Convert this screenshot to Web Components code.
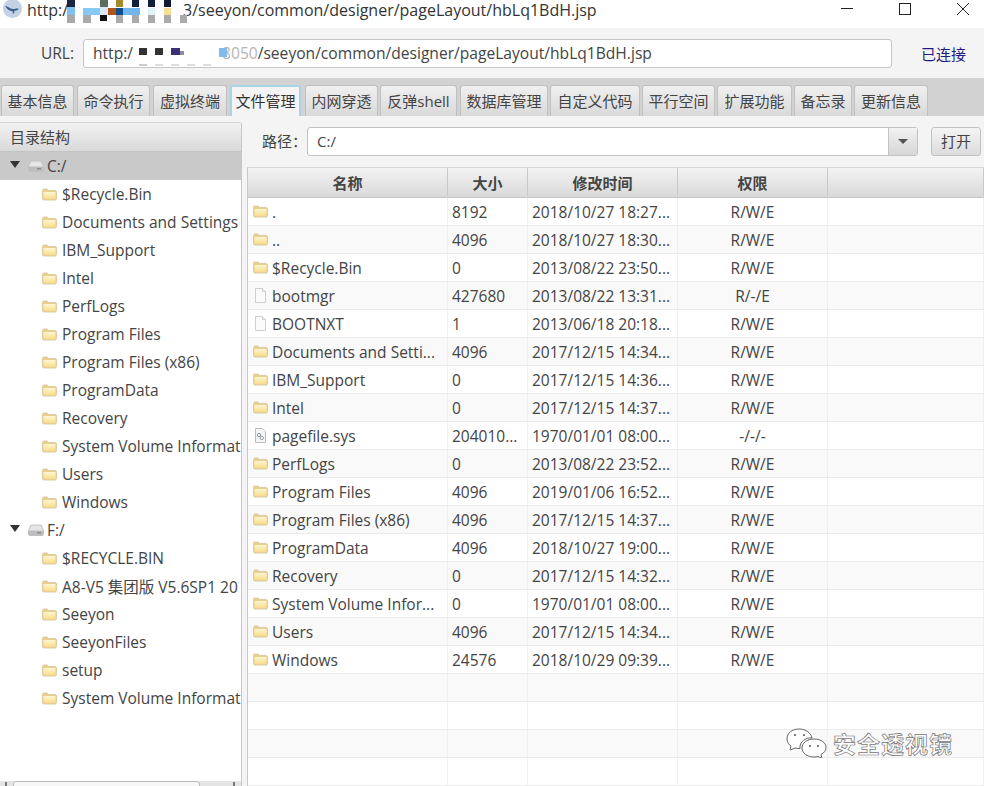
<!DOCTYPE html>
<html lang="zh">
<head>
<meta charset="utf-8">
<title>file manager</title>
<style>
  html, body { margin: 0; height: 100%; overflow: hidden; background: #f4f4f4; }
  body { font-family: "Open Sans", "Noto Sans CJK SC", sans-serif; color: #3c3c3c; }
</style>
</head>
<body>
<app-window></app-window>

<script>
const FOLDER = `<svg width="15" height="13" viewBox="0 0 15 13"><defs><linearGradient id="fold" x1="0" y1="0" x2="0" y2="1"><stop offset="0" stop-color="#fef6d2"/><stop offset="1" stop-color="#f8dc8a"/></linearGradient></defs><path d="M.5 2.500C.5 1.600 1 1 2 1h3.200l1.200 1.500H13c.9 0 1.500.5 1.500 1.400v6.600c0 .9-.6 1.500-1.500 1.500H2c-1 0-1.500-.6-1.500-1.500z" fill="#ebcf8c" stroke="#dccda6"/><rect x="1.500" y="4" width="12" height="7" fill="url(#fold)"/></svg>`;
const DOC = `<svg width="15" height="15" viewBox="-1 0 15 15"><path d="M1.500.5h7l3 3v11h-10z" fill="#fbfbfb" stroke="#cfcfcf"/><path d="M8.500.5v3h3" fill="#eee" stroke="#cfcfcf"/></svg>`;
const SYS = `<svg width="15" height="15" viewBox="-1 0 15 15"><path d="M1.500.5h7l3 3v11h-10z" fill="#f6f6f6" stroke="#bcbcbc"/><circle cx="5" cy="7" r="1.700" fill="none" stroke="#8a93a3"/><circle cx="7.800" cy="10" r="1.700" fill="none" stroke="#9aa2ae"/></svg>`;
const DRIVE = `<svg width="16" height="12" viewBox="0 0 16 12"><path d="M3 1h10l2.500 5.500v4c0 .6-.4 1-1 1h-13c-.6 0-1-.4-1-1v-4z" fill="#e6e6e6" stroke="#c0c0c0"/><rect x="1" y="6.500" width="14" height="4.500" fill="#bdbdbd"/><rect x="9" y="8" width="4" height="1.400" fill="#8a8a8a"/></svg>`;

function grad(top, bottom) { return `linear-gradient(${top}, ${bottom})`; }

class TitleBar extends HTMLElement {
  constructor() {
    super();
    this.attachShadow({ mode: 'open' });
    const blocks = [
      [67,0,8,7,'#1a2540'],[67,7,8,8,'#7fc0ee'],[67,15,8,8,'#a9a9a9'],
      [83,8,17,7,'#88c8f5'],[83,15,8,8,'#aaa'],
      [100,0,8,7,'#5a6f62'],[100,7,8,8,'#d9e8f2'],[100,15,7,6,'#111'],[108,8,8,7,'#b5541a'],
      [116,0,7,7,'#a58a2a'],[116,8,7,7,'#0d4f8c'],[116,15,7,8,'#aaa'],[123,8,17,7,'#72b6ee'],
      [132,0,7,7,'#13203a'],[132,15,7,8,'#aaa'],
      [148,0,7,7,'#10203a'],[148,8,7,7,'#dff3fa'],[148,15,7,8,'#aaa'],
      [164,0,7,7,'#0f1c33'],[164,8,7,7,'#fbdc95'],[164,15,7,8,'#aaa'],
      [180,15,7,8,'#aaa']
    ].map(b => `<rect x="${b[0]}" y="${b[1]}" width="${b[2]}" height="${b[3]}" fill="${b[4]}"/>`).join('');
    this.shadowRoot.innerHTML = `
      <style>
        :host { display: flex; align-items: flex-start; height: 28px; background: #fff; position: relative; padding-left: 2px; box-sizing: border-box; }
        .logo { width: 21px; height: 19px; flex: none; }
        .text { font-size: 16px; line-height: 18px; margin: 1px 0 0 4px; white-space: pre; color: #333; }
        .hole { display: inline-block; width: 115px; }
        .mosaic { position: absolute; left: 0; top: 0; }
        .btns { margin-left: auto; display: flex; gap: 46px; padding: 3px 15px 0 0; }
        .btns svg { display: block; width: 12px; height: 12px; }
      </style>
      <svg class="logo" viewBox="0 0 21 19">
        <circle cx="10.500" cy="8.500" r="9.500" fill="#c3d2e5"/>
        <path d="M3 6c3 0 5 3 8 3s4-1 6 0c-2 1-3 2-5 2 1 2 0 2.500-1.500 2.500l.5-2C7 11 5 9 3 6z" fill="#3d5f92"/>
      </svg>
      <span class="text">http:/<span class="hole"></span>3/seeyon/common/designer/pageLayout/hbLq1BdH.jsp</span>
      <svg class="mosaic" width="200" height="28">${blocks}</svg>
      <div class="btns">
        <svg viewBox="0 0 12 12"><path d="M0 5.500h12" stroke="#222" fill="none"/></svg>
        <svg viewBox="0 0 12 12"><rect x=".5" y=".5" width="11" height="11" stroke="#222" fill="none"/></svg>
        <svg viewBox="0 0 12 12"><path d="M0 0l12 12M12 0L0 12" stroke="#222" fill="none"/></svg>
      </div>`;
  }
}

class UrlBar extends HTMLElement {
  constructor() {
    super();
    this.attachShadow({ mode: 'open' });
    this.shadowRoot.innerHTML = `
      <style>
        :host { display: flex; align-items: center; height: 50px; background: #f4f4f4; font-size: 15.500px; box-sizing: border-box; padding-left: 41px; position: relative; }
        label { width: 42px; color: #444; }
        .input { width: 809px; height: 29px; box-sizing: border-box; background: #fff; border: 1px solid #c6c6c6; border-radius: 3px; padding-left: 9px; line-height: 27px; white-space: pre; color: #444; font-size: 15.600px; }
        .hole { display: inline-block; width: 89px; }
        .faint { color: #b5b5b5; }
        .status { margin-left: 29px; color: #1c1c80; font-size: 15px; }
        svg { position: absolute; left: 0; top: 0; }
      </style>
      <label>URL:</label>
      <div class="input">http:/<span class="hole"></span><span class="faint">8050</span>/seeyon/common/designer/pageLayout/hbLq1BdH.jsp</div>
      <div class="status">已连接</div>
      <svg width="240" height="50">
        <rect x="139" y="20" width="8" height="7" fill="#333"/><rect x="155" y="20" width="8" height="7" fill="#333"/>
        <rect x="171" y="20" width="9" height="7" fill="#3a3178"/><rect x="180" y="23" width="4" height="4" fill="#8b8ba8"/>
        <rect x="219" y="20" width="8" height="9" fill="#7fbcec"/>
        <rect x="139" y="36" width="8" height="2" fill="#ccc"/><rect x="155" y="36" width="8" height="2" fill="#ddd"/>
        <rect x="171" y="36" width="8" height="2" fill="#ddd"/><rect x="187" y="36" width="8" height="2" fill="#ddd"/>
        <rect x="203" y="36" width="8" height="2" fill="#ddd"/>
      </svg>`;
  }
}

class TabStrip extends HTMLElement {
  constructor() {
    super();
    this.attachShadow({ mode: 'open' });
    const tabs = [['基本信息',1,74],['命令执行',77,150],['虚拟终端',153,227],['文件管理',230,301],['内网穿透',305,378],['反弹shell',380,457],['数据库管理',460,548],['自定义代码',550,640],['平行空间',642,715],['扩展功能',717,792],['备忘录',794,852],['更新信息',854,928]];
    let x = 0;
    const html = tabs.map((t, i) => {
      const out = `<div class="tab${i === 3 ? ' on' : ''}" style="margin-left:${t[1] - x}px;width:${t[2] - t[1]}px">${t[0]}</div>`;
      x = t[2];
      return out;
    }).join('');
    this.shadowRoot.innerHTML = `
      <style>
        :host { display: flex; align-items: flex-end; height: 38px; box-sizing: border-box; background: #d2d2d2; }
        .tab { height: 31px; box-sizing: border-box; padding-bottom: 2px; display: flex; align-items: center; justify-content: center; font-size: 15px; color: #444; border: 1px solid #c0c0c0; border-bottom: 0; border-radius: 3px 3px 0 0; background: ${grad('#f0f0f0','#d9d9d9')}; white-space: nowrap; }
        .on { background: #f4f4f4; border: 2px solid #a9d3e6; border-bottom: 0; color: #333; }
      </style>
      ${html}`;
  }
}

class TreeRow extends HTMLElement {
  constructor() {
    super();
    this.attachShadow({ mode: 'open' });
  }
  connectedCallback() {
    const drive = this.hasAttribute('drive');
    this.shadowRoot.innerHTML = `
      <style>
        :host { display: flex; align-items: center; height: 28px; font-size: 15.500px; white-space: nowrap; color: #444; padding-left: ${drive ? 10 : 42}px; }
        :host([open]) { background: #c9c9c9; }
        .arrow { width: 0; height: 0; border: 5px solid transparent; border-top: 7px solid #333; border-bottom: 0; margin-right: 8px; margin-top: -3px; }
        svg { flex: none; margin-right: ${drive ? 3 : 5}px; }
      </style>
      ${drive ? '<span class="arrow"></span>' + DRIVE : FOLDER}<slot></slot>`;
  }
}

class TreePanel extends HTMLElement {
  constructor() {
    super();
    this.attachShadow({ mode: 'open' });
    const c = ['$Recycle.Bin','Documents and Settings','IBM_Support','Intel','PerfLogs','Program Files','Program Files (x86)','ProgramData','Recovery','System Volume Informat','Users','Windows'];
    const f = ['$RECYCLE.BIN','A8-V5 集团版 V5.6SP1 20','Seeyon','SeeyonFiles','setup','System Volume Informat'];
    const rows = list => list.map(n => `<tree-row>${n}</tree-row>`).join('');
    this.shadowRoot.innerHTML = `
      <style>
        :host { display: flex; flex-direction: column; width: 242px; flex: none; box-sizing: border-box; background: #fff; border-right: 1px solid #c8c8c8; border-top: 1px solid #d4d4d4; margin-top: 6px; position: relative; overflow: hidden; border-radius: 0 3px 0 0; }
        .head { height: 29px; box-sizing: border-box; padding-bottom: 2px; flex: none; display: flex; align-items: center; padding-left: 10px; font-size: 15px; color: #444; background: ${grad('#f2f2f2','#d9d9d9')}; border-bottom: 1px solid #c4c4c4; }
        .bar { position: absolute; left: 0; right: 0; bottom: 0; height: 5px; background: #e4e4e4; }
        .bar i { position: absolute; left: 13px; top: 0; width: 185px; height: 8px; background: #f7f7f7; border: 1px solid #bbb; border-radius: 3px; }
        .bar b { position: absolute; top: 1px; width: 2px; height: 4px; background: #777; }
      </style>
      <div class="head">目录结构</div>
      <tree-row drive open>C:/</tree-row>${rows(c)}
      <tree-row drive>F:/</tree-row>${rows(f)}
      <div class="bar"><b style="left:5px"></b><i></i><b style="left:233px"></b></div>`;
  }
}

class PathBar extends HTMLElement {
  constructor() {
    super();
    this.attachShadow({ mode: 'open' });
    this.shadowRoot.innerHTML = `
      <style>
        :host { display: flex; align-items: flex-start; height: 51px; box-sizing: border-box; padding: 11px 3px 0 15px; flex: none; font-size: 15px; color: #444; }
        label { width: 45px; flex: none; line-height: 29px; }
        .combo { width: 611px; height: 29px; box-sizing: border-box; display: flex; background: #fff; border: 1px solid #c2c2c2; border-radius: 3px; }
        .val { flex: 1; padding-left: 9px; line-height: 27px; }
        .drop { width: 28px; background: ${grad('#f2f2f2','#d6d6d6')}; border-left: 1px solid #c4c4c4; display: flex; align-items: center; justify-content: center; }
        .drop i { border: 5px solid transparent; border-top: 5px solid #555; border-bottom: 0; }
        button { all: unset; margin-left: 13px; width: 50px; height: 29px; box-sizing: border-box; text-align: center; line-height: 27px; border: 1px solid #c2c2c2; border-radius: 3px; background: ${grad('#f4f4f4','#dcdcdc')}; }
      </style>
      <label>路径：</label>
      <div class="combo"><div class="val">C:/</div><div class="drop"><i></i></div></div>
      <button>打开</button>`;
  }
}

class FileTable extends HTMLElement {
  constructor() {
    super();
    this.attachShadow({ mode: 'open' });
    const t = FOLDER, d = DOC, s = SYS;
    const files = [
      [t,'.','8192','2018/10/27 18:27...','R/W/E'],
      [t,'..','4096','2018/10/27 18:30...','R/W/E'],
      [t,'$Recycle.Bin','0','2013/08/22 23:50...','R/W/E'],
      [d,'bootmgr','427680','2013/08/22 13:31...','R/-/E'],
      [d,'BOOTNXT','1','2013/06/18 20:18...','R/W/E'],
      [t,'Documents and Setti...','4096','2017/12/15 14:34...','R/W/E'],
      [t,'IBM_Support','0','2017/12/15 14:36...','R/W/E'],
      [t,'Intel','0','2017/12/15 14:37...','R/W/E'],
      [s,'pagefile.sys','204010...','1970/01/01 08:00...','-/-/-'],
      [t,'PerfLogs','0','2013/08/22 23:52...','R/W/E'],
      [t,'Program Files','4096','2019/01/06 16:52...','R/W/E'],
      [t,'Program Files (x86)','4096','2017/12/15 14:37...','R/W/E'],
      [t,'ProgramData','4096','2018/10/27 19:00...','R/W/E'],
      [t,'Recovery','0','2017/12/15 14:32...','R/W/E'],
      [t,'System Volume Infor...','0','1970/01/01 08:00...','R/W/E'],
      [t,'Users','4096','2017/12/15 14:34...','R/W/E'],
      [t,'Windows','24576','2018/10/29 09:39...','R/W/E'],
      [], [], [], []
    ];
    const row = f => f.length
      ? `<div class="row"><div class="c">${f[0]}<span>${f[1]}</span></div><div class="c">${f[2]}</div><div class="c">${f[3]}</div><div class="c mid">${f[4]}</div><div class="c"></div></div>`
      : `<div class="row"><div class="c"></div><div class="c"></div><div class="c"></div><div class="c"></div><div class="c"></div></div>`;
    this.shadowRoot.innerHTML = `
      <style>
        :host { display: block; flex: 1; min-height: 0; overflow: hidden; border-left: 1px solid #c8c8c8; border-top: 1px solid #d6d6d6; background: #fff; font-size: 15.500px; color: #444; }
        .row, .headrow { display: grid; grid-template-columns: 200px 80px 150px 150px 1fr; }
        .headrow { height: 30px; box-sizing: border-box; padding-bottom: 1px; background: ${grad('#f3f3f3','#d9d9d9')}; border-bottom: 1px solid #c6c6c6; font-size: 15px; font-weight: 700; color: #444; }
        .headrow div { display: flex; align-items: center; justify-content: center; border-right: 1px solid #c9c9c9; }
        .row { height: 28px; box-sizing: border-box; border-bottom: 1px solid #ececec; }
        .row:nth-child(even) { background: #f9f9f9; }
        .c { display: flex; align-items: center; padding-left: 4px; border-right: 1px solid #efefef; white-space: nowrap; overflow: hidden; }
        .c svg { flex: none; margin: 0 4px 0 1px; }
        .mid { justify-content: center; padding-left: 0; }
      </style>
      <div class="headrow"><div>名称</div><div>大小</div><div>修改时间</div><div>权限</div><div></div></div>
      <div>${files.map(row).join('')}</div>`;
  }
}

class WechatMark extends HTMLElement {
  constructor() {
    super();
    this.attachShadow({ mode: 'open' });
    this.shadowRoot.innerHTML = `
      <style>
        :host { position: absolute; left: 786px; top: 726px; display: flex; align-items: center; gap: 6px; }
        span { font: 700 23px "Noto Sans CJK SC", sans-serif; letter-spacing: 1px; color: #fff; -webkit-text-stroke: .7px #777; }
        svg { display: block; }
      </style>
      <svg width="41" height="30" viewBox="0 0 41 30" fill="#fff" stroke="#666" stroke-width="1">
        <path d="M13 1C6 1 1 5 1 11c0 3 2 6 4 7l-1 4 5-2c2 .6 3 .6 5 .5C13 14 20 9 26 10 25 5 20 1 13 1z"/>
        <path d="M28 11c-7 0-12 4-12 9s5 9 12 9c1 0 3 0 4-.5l4 2-1-4c3-1.500 5-4 5-7 0-5-5-8.500-12-8.500z"/>
        <circle cx="9" cy="7" r="1" fill="#555" stroke="none"/><circle cx="18" cy="7" r="1" fill="#555" stroke="none"/>
        <circle cx="24" cy="18" r="1" fill="#555" stroke="none"/><circle cx="32" cy="18" r="1" fill="#555" stroke="none"/>
      </svg>
      <span>安全透视镜</span>`;
  }
}

class AppWindow extends HTMLElement {
  constructor() {
    super();
    this.attachShadow({ mode: 'open' });
    this.shadowRoot.innerHTML = `
      <style>
        :host { display: flex; flex-direction: column; width: 984px; height: 786px; overflow: hidden; position: relative; background: #f4f4f4; }
        .main { flex: 1; min-height: 0; display: flex; }
        .right { flex: 1; min-width: 0; display: flex; flex-direction: column; padding-left: 5px; }
      </style>
      <title-bar></title-bar>
      <url-bar></url-bar>
      <tab-strip></tab-strip>
      <div class="main">
        <tree-panel></tree-panel>
        <div class="right"><path-bar></path-bar><file-table></file-table></div>
      </div>
      <wechat-mark></wechat-mark>`;
  }
}

customElements.define('title-bar', TitleBar);
customElements.define('url-bar', UrlBar);
customElements.define('tab-strip', TabStrip);
customElements.define('tree-row', TreeRow);
customElements.define('tree-panel', TreePanel);
customElements.define('path-bar', PathBar);
customElements.define('file-table', FileTable);
customElements.define('wechat-mark', WechatMark);
customElements.define('app-window', AppWindow);
</script>
</body>
</html>
